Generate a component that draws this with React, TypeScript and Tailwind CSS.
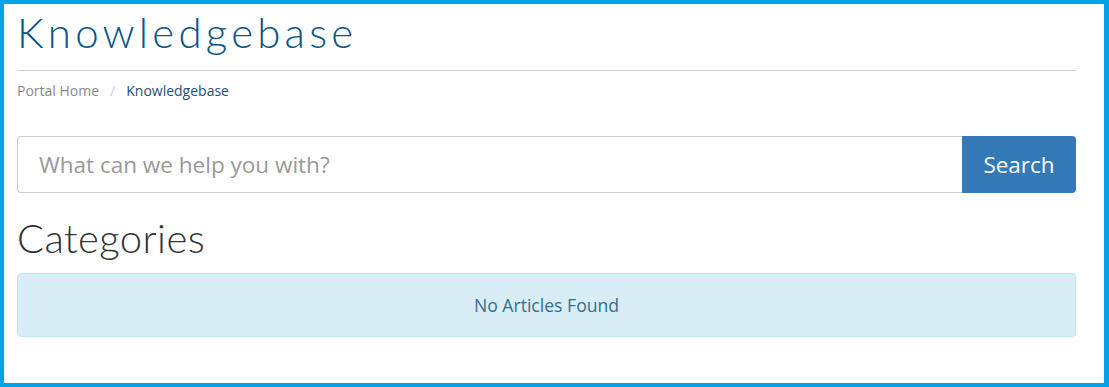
export default function App() {
  return (
    <div className="h-[387px] w-[1109px] overflow-hidden border-t-4 border-l-4 border-b-4 border-r-[5px] border-[#00a3e8] bg-white">
      <div className="pl-[13px] pr-[28px]" style={{ fontFamily: '"Open Sans", sans-serif' }}>
        <h1
          className="pt-[5px] pb-[15px] text-[42px] leading-[46px] font-light tracking-[4.2px] text-[#0a5488] border-b border-[#cfcfcf]"
          style={{ fontFamily: 'Lato, sans-serif' }}
        >
          Knowledgebase
        </h1>
        <nav className="mt-[11px] flex items-center text-[14px] leading-[18px]">
          <span className="text-[#888]">Portal Home</span>
          <span className="px-[11px] text-[#ccc]">/</span>
          <span className="text-[#1d4f74]">Knowledgebase</span>
        </nav>
        <form className="mt-[36px] flex h-[57px]" onSubmit={(e) => e.preventDefault()}>
          <input
            type="text"
            placeholder="What can we help you with?"
            className="flex-1 rounded-l-[4px] border border-r-0 border-[#ccc] px-[21px] text-[22.5px] text-[#555] placeholder:text-[#999] outline-none"
          />
          <button className="w-[114px] rounded-r-[4px] bg-[#337ab7] text-[22.5px] text-white">Search</button>
        </form>
        <h2
          className="mt-[23px] text-[40px] leading-[44px] font-light tracking-[0.4px] text-[#333]"
          style={{ fontFamily: 'Lato, sans-serif' }}
        >
          Categories
        </h2>
        <div className="mt-[13px] flex h-[64px] items-center justify-center rounded-[4px] border border-[#bce8f1] bg-[#d9edf7] text-[17.6px] text-[#31708f]">
          No Articles Found
        </div>
      </div>
    </div>
  )
}
